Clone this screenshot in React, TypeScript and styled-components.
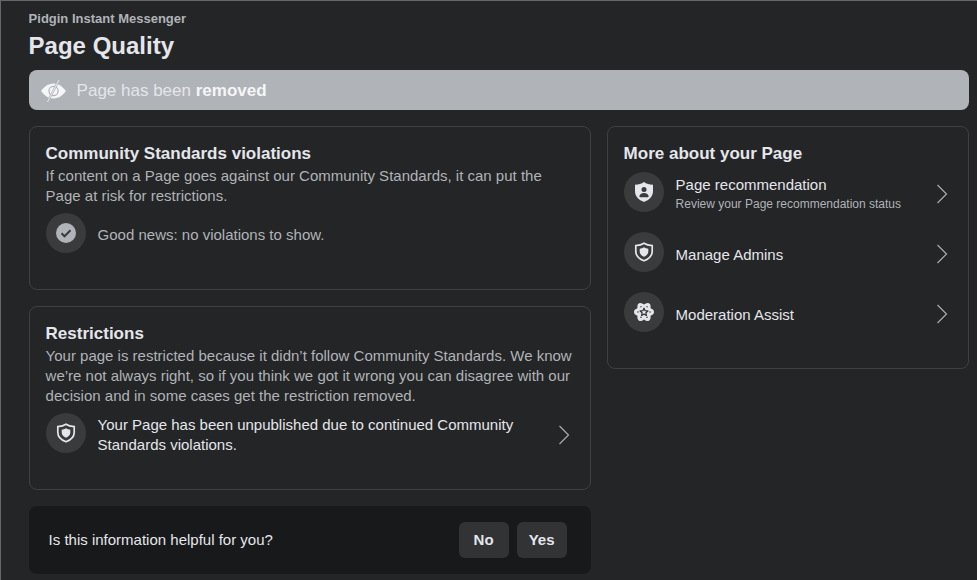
import React from "react";
import styled, { createGlobalStyle } from "styled-components";

const Global = createGlobalStyle`
  html, body { margin: 0; padding: 0; background: #242526; }
  body { font-family: "Liberation Sans", Arial, sans-serif; }
  * { box-sizing: border-box; }
`;

const Frame = styled.div`
  width: 977px;
  height: 580px;
  overflow: hidden;
  border-top: 1px solid #65676b;
  border-left: 1px solid #65676b;
  padding: 10px 8px 0 27.6px;
`;
const PageName = styled.div`
  font-size: 13px;
  line-height: 16px;
  font-weight: 700;
  color: #b0b3b8;
`;
const Title = styled.h1`
  margin: 3px 0 8px;
  font-size: 24px;
  line-height: 32px;
  font-weight: 700;
  color: #e4e6eb;
`;
const Banner = styled.div`
  height: 40px;
  border-radius: 8px;
  background: #b0b3b8;
  display: flex;
  align-items: center;
  padding: 1px 0 0 12px;
  gap: 10px;
  font-size: 17px;
  color: #e4e6eb;
  margin-bottom: 16px;
  b { color: #f5f6f7; }
`;
const Columns = styled.div`
  display: grid;
  grid-template-columns: 562px 362px;
  gap: 16px;
  align-items: start;
`;
const Column = styled.div`
  display: flex;
  flex-direction: column;
  gap: 16px;
`;
const Card = styled.section<{ $h: number }>`
  height: ${(p) => p.$h}px;
  border: 1px solid #3e4042;
  border-radius: 8px;
  padding: 17px 16px 16px;
`;
const CardTitle = styled.h2`
  margin: 0;
  font-size: 17px;
  line-height: 20px;
  font-weight: 700;
  color: #e4e6eb;
`;
const CardText = styled.p`
  margin: 2px 0 0;
  font-size: 15px;
  line-height: 20px;
  color: #b0b3b8;
`;
const Row = styled.div<{ $h?: number; $top?: number }>`
  display: flex;
  align-items: center;
  gap: 12px;
  height: ${(p) => p.$h ?? 44}px;
  margin-top: ${(p) => p.$top ?? 7}px;
`;
const Badge = styled.div`
  width: 40px;
  height: 40px;
  border-radius: 50%;
  background: #3a3b3c;
  display: flex;
  align-items: center;
  justify-content: center;
  flex: none;
  align-self: flex-start;
`;
const RowBody = styled.div`
  flex: 1;
  min-width: 0;
`;
const RowText = styled.div<{ $muted?: boolean }>`
  font-size: 15px;
  line-height: 20px;
  color: ${(p) => (p.$muted ? "#b0b3b8" : "#e4e6eb")};
`;
const RowSub = styled.div`
  margin: 1px 0;
  font-size: 12px;
  line-height: 16px;
  color: #b0b3b8;
`;
const Chevron = styled.svg<{ $lift?: boolean }>`
  flex: none;
  margin: 0 4px ${(p) => (p.$lift ? 2 : 0)}px 0;
`;
const Feedback = styled.div`
  height: 68px;
  border-radius: 8px;
  background: #18191a;
  display: flex;
  align-items: center;
  justify-content: space-between;
  padding: 0 24px 2px 20px;
  font-size: 15px;
  color: #e4e6eb;
`;
const Buttons = styled.div`
  display: flex;
  gap: 8px;
  margin-bottom: -2px;
`;
const Btn = styled.button`
  width: 50px;
  height: 36px;
  border: 0;
  border-radius: 6px;
  background: #323335;
  color: #e4e6eb;
  font: 700 15px "Liberation Sans", Arial, sans-serif;
  padding: 0 0 2px;
`;

const Arrow = ({ lift }: { lift?: boolean }) => (
  <Chevron $lift={lift} width="12" height="20" viewBox="0 0 12 20" fill="none">
    <path d="M1.5 1l9 9-9 9" stroke="#a8abb0" strokeWidth="1.2" />
  </Chevron>
);

const ShieldOutline = () => (
  <svg width="20" height="20" viewBox="0 0 20 20">
    <path d="M10 1.200c2.200 1.500 4.800 2.200 8.200 2.400v5.600c0 4.500-3.400 7.800-8.200 9.600-4.800-1.800-8.200-5.100-8.200-9.600V3.600c3.400-.2 6-.9 8.200-2.400z" fill="none" stroke="#e4e6eb" strokeWidth="1.700" />
    <path d="M10 5.200c1.300.8 2.700 1.300 4.300 1.500v2.900c0 2.400-1.600 4-4.300 5.200-2.700-1.200-4.300-2.800-4.300-5.200V6.700c1.600-.2 3-.7 4.300-1.500z" fill="#e4e6eb" />
  </svg>
);
const ShieldPerson = () => (
  <svg width="20" height="20" viewBox="0 0 20 20">
    <path d="M10 0c2.500 1.700 5.300 2.600 9 2.800v6.500c0 5-3.600 8.700-9 10.700-5.400-2-9-5.700-9-10.700V2.800C4.700 2.600 7.500 1.700 10 0z" fill="#e4e6eb" />
    <circle cx="10" cy="7.600" r="2.500" fill="#3a3b3c" />
    <path d="M5.400 14.600c0-2.200 2-3.500 4.600-3.500s4.600 1.300 4.600 3.500c0 .4-.3.7-.7.7H6.100c-.4 0-.7-.3-.7-.7z" fill="#3a3b3c" />
  </svg>
);
const Atom = () => (
  <svg width="20" height="20" viewBox="0 0 20 20" fill="none" stroke="#e4e6eb" strokeWidth="3">
    <ellipse cx="10" cy="10" rx="8.500" ry="3.300" />
    <ellipse cx="10" cy="10" rx="8.500" ry="3.300" transform="rotate(60 10 10)" />
    <ellipse cx="10" cy="10" rx="8.500" ry="3.300" transform="rotate(120 10 10)" />
    <path d="M10 6.200l1.150 2.500 2.750.3-2 1.800.55 2.700L10 12.150 7.550 13.500l.55-2.700-2-1.800 2.750-.3z" fill="#e4e6eb" stroke="#3a3b3c" strokeWidth="1.300" strokeLinejoin="round" />
  </svg>
);
const Check = () => (
  <svg width="20" height="20" viewBox="0 0 20 20">
    <circle cx="10" cy="10" r="10" fill="#b0b3b8" />
    <path d="M5.500 10.300l3 3 6-6" fill="none" stroke="#3a3b3c" strokeWidth="2" />
  </svg>
);
const EyeOff = () => (
  <svg width="26" height="24" viewBox="0 0 26 24">
    <path fillRule="evenodd" d="M12.500 4.500c5.500 0 9.800 3.700 12.300 7.500-2.500 3.800-6.800 7.500-12.300 7.500S2.700 15.800.2 12C2.700 8.200 7 4.500 12.500 4.500zm0 2.300a5.200 5.200 0 100 10.400 5.200 5.200 0 000-10.400z" fill="#f5f6f7" />
    <circle cx="12.500" cy="12" r="4" fill="#f5f6f7" />
    <path d="M18 1L6.500 23" stroke="#b0b3b8" strokeWidth="2.200" />
    <path d="M18 1L6.500 23" stroke="#f5f6f7" strokeWidth=".8" />
  </svg>
);

export default function App() {
  return (
    <Frame>
      <Global />
      <PageName>Pidgin Instant Messenger</PageName>
      <Title>Page Quality</Title>
      <Banner>
        <EyeOff />
        <span>
          Page has been <b>removed</b>
        </span>
      </Banner>
      <Columns>
        <Column>
          <Card $h={164}>
            <CardTitle>Community Standards violations</CardTitle>
            <CardText>
              If content on a Page goes against our Community Standards, it can put the Page at risk for restrictions.
            </CardText>
            <Row>
              <Badge>
                <Check />
              </Badge>
              <RowText $muted>Good news: no violations to show.</RowText>
            </Row>
          </Card>
          <Card $h={184}>
            <CardTitle>Restrictions</CardTitle>
            <CardText>
              Your page is restricted because it didn’t follow Community Standards. We know we’re not always right, so if you think we got it wrong you can disagree with our decision and in some cases get the restriction removed.
            </CardText>
            <Row>
              <Badge>
                <ShieldOutline />
              </Badge>
              <RowBody>
                <RowText>Your Page has been unpublished due to continued Community Standards violations.</RowText>
              </RowBody>
              <Arrow />
            </Row>
          </Card>
          <Feedback>
            <span>Is this information helpful for you?</span>
            <Buttons>
              <Btn>No</Btn>
              <Btn>Yes</Btn>
            </Buttons>
          </Feedback>
        </Column>
        <Card $h={243}>
          <CardTitle>More about your Page</CardTitle>
          <Row $top={8}>
            <Badge>
              <ShieldPerson />
            </Badge>
            <RowBody>
              <RowText>Page recommendation</RowText>
              <RowSub>Review your Page recommendation status</RowSub>
            </RowBody>
            <Arrow />
          </Row>
          <Row $top={16} $h={46}>
            <Badge>
              <ShieldOutline />
            </Badge>
            <RowBody>
              <RowText>Manage Admins</RowText>
            </RowBody>
            <Arrow lift />
          </Row>
          <Row $top={14} $h={46}>
            <Badge>
              <Atom />
            </Badge>
            <RowBody>
              <RowText>Moderation Assist</RowText>
            </RowBody>
            <Arrow lift />
          </Row>
        </Card>
      </Columns>
    </Frame>
  );
}
